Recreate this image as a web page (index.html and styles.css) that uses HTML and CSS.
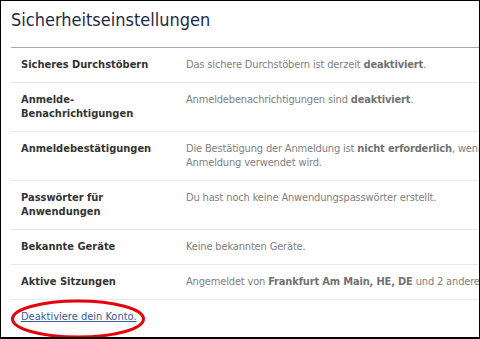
FILE: index.html
```html
<!DOCTYPE html>
<html lang="de">
<head>
<meta charset="utf-8">
<title>Sicherheitseinstellungen</title>
<link rel="stylesheet" href="styles.css">
</head>
<body>
<div class="frame">
  <div class="header">
    <h1 class="title">Sicherheitseinstellungen</h1>
  </div>
  <div class="settings">
    <div class="row">
      <div class="label">Sicheres Durchstöbern</div>
      <div class="value">Das sichere Durchstöbern ist derzeit <b>deaktiviert</b>.</div>
    </div>
    <div class="row">
      <div class="label">Anmelde-Benachrichtigungen</div>
      <div class="value">Anmeldebenachrichtigungen sind <b>deaktiviert</b>.</div>
    </div>
    <div class="row">
      <div class="label">Anmeldebestätigungen</div>
      <div class="value">Die Bestätigung der Anmeldung ist <b>nicht erforderlich</b>, wenn ein unbekanntes Gerät zur<br>Anmeldung verwendet wird.</div>
    </div>
    <div class="row">
      <div class="label">Passwörter für Anwendungen</div>
      <div class="value">Du hast noch keine Anwendungspasswörter erstellt.</div>
    </div>
    <div class="row">
      <div class="label">Bekannte Geräte</div>
      <div class="value">Keine bekannten Geräte.</div>
    </div>
    <div class="row">
      <div class="label">Aktive Sitzungen</div>
      <div class="value">Angemeldet von <b>Frankfurt Am Main, HE, DE</b> und 2 anderen Orten.</div>
    </div>
    <div class="footer">
      <a class="deactivate" href="#">Deaktiviere dein Konto.</a>
      <svg class="mark" width="140" height="42" viewBox="0 0 140 42" aria-hidden="true">
        <ellipse cx="68" cy="20" rx="65.5" ry="18" fill="none" stroke="#e5000a" stroke-width="3"/>
      </svg>
    </div>
  </div>
</div>
</body>
</html>
```
FILE: styles.css
```css
html, body {
  margin: 0;
  padding: 0;
  background: #fff;
}

.frame {
  width: 480px;
  height: 339px;
  box-sizing: border-box;
  border: 1px solid #000;
  border-bottom-width: 2px;
  overflow: hidden;
  font-family: "DejaVu Sans Condensed", "DejaVu Sans", sans-serif;
  font-size: 11px;
  line-height: 14px;
  color: #333;
}

.header {
  height: 47px;
  box-sizing: border-box;
  margin-left: 10px;
  width: 560px;
  border-bottom: 1px solid #aaa;
  padding-top: 8px;
}

.title {
  margin: 0;
  font-size: 18px;
  line-height: 22px;
  font-weight: normal;
  color: #1c2a47;
}

.settings {
  margin-left: 10px;
  width: 560px;
  position: relative;
}

.row {
  display: grid;
  grid-template-columns: 175px 1fr;
  padding: 10px 0;
  border-bottom: 1px solid #e9e9e9;
}

.label {
  padding-left: 10px;
  width: 135px;
  font-weight: bold;
  color: #333;
}

.value {
  color: #808080;
  white-space: nowrap;
  letter-spacing: -0.16px;
}

.value b {
  color: #727272;
}

.footer {
  position: relative;
  padding: 10px 0 0 10px;
}

.deactivate {
  color: #3b5998;
  text-decoration: underline;
}

.mark {
  position: absolute;
  left: -1px;
  top: -1px;
  pointer-events: none;
}
```
